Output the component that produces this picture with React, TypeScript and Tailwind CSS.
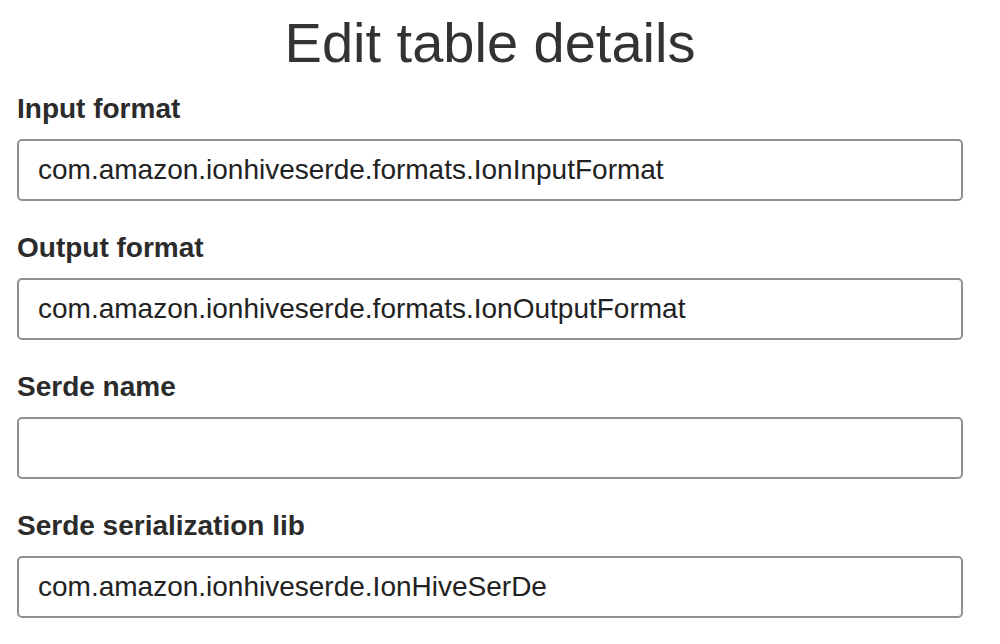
import React from 'react';

interface FieldProps {
  label: string;
  value: string;
}

const Field = ({ label, value }: FieldProps) => {
  return (
    <div className="flex flex-col">
      <label className="mb-[13px] h-[34px] text-[28px] font-bold leading-[34px] text-[#2b2b2b]">
        {label}
      </label>
      <input
        readOnly
        value={value}
        className="h-[62px] w-full rounded-[5px] border-2 border-[#8d9196] bg-white px-[19px] text-[28px] text-[#222] outline-none"
      />
    </div>
  );
};

const fields: FieldProps[] = [
  { label: 'Input format', value: 'com.amazon.ionhiveserde.formats.IonInputFormat' },
  { label: 'Output format', value: 'com.amazon.ionhiveserde.formats.IonOutputFormat' },
  { label: 'Serde name', value: '' },
  { label: 'Serde serialization lib', value: 'com.amazon.ionhiveserde.IonHiveSerDe' },
];

const App = () => {
  return (
    <div className="min-h-screen bg-white pl-[17px] pr-[37px] pt-[9px] font-['Liberation_Sans',Arial,sans-serif]">
      <h1 className="mb-[16px] h-[67px] text-center text-[56px] font-normal leading-[67px] text-[#333]">
        Edit table details
      </h1>
      <div className="flex flex-col gap-[30px]">
        {fields.map((f) => (
          <Field key={f.label} label={f.label} value={f.value} />
        ))}
      </div>
    </div>
  );
};

export default App;
